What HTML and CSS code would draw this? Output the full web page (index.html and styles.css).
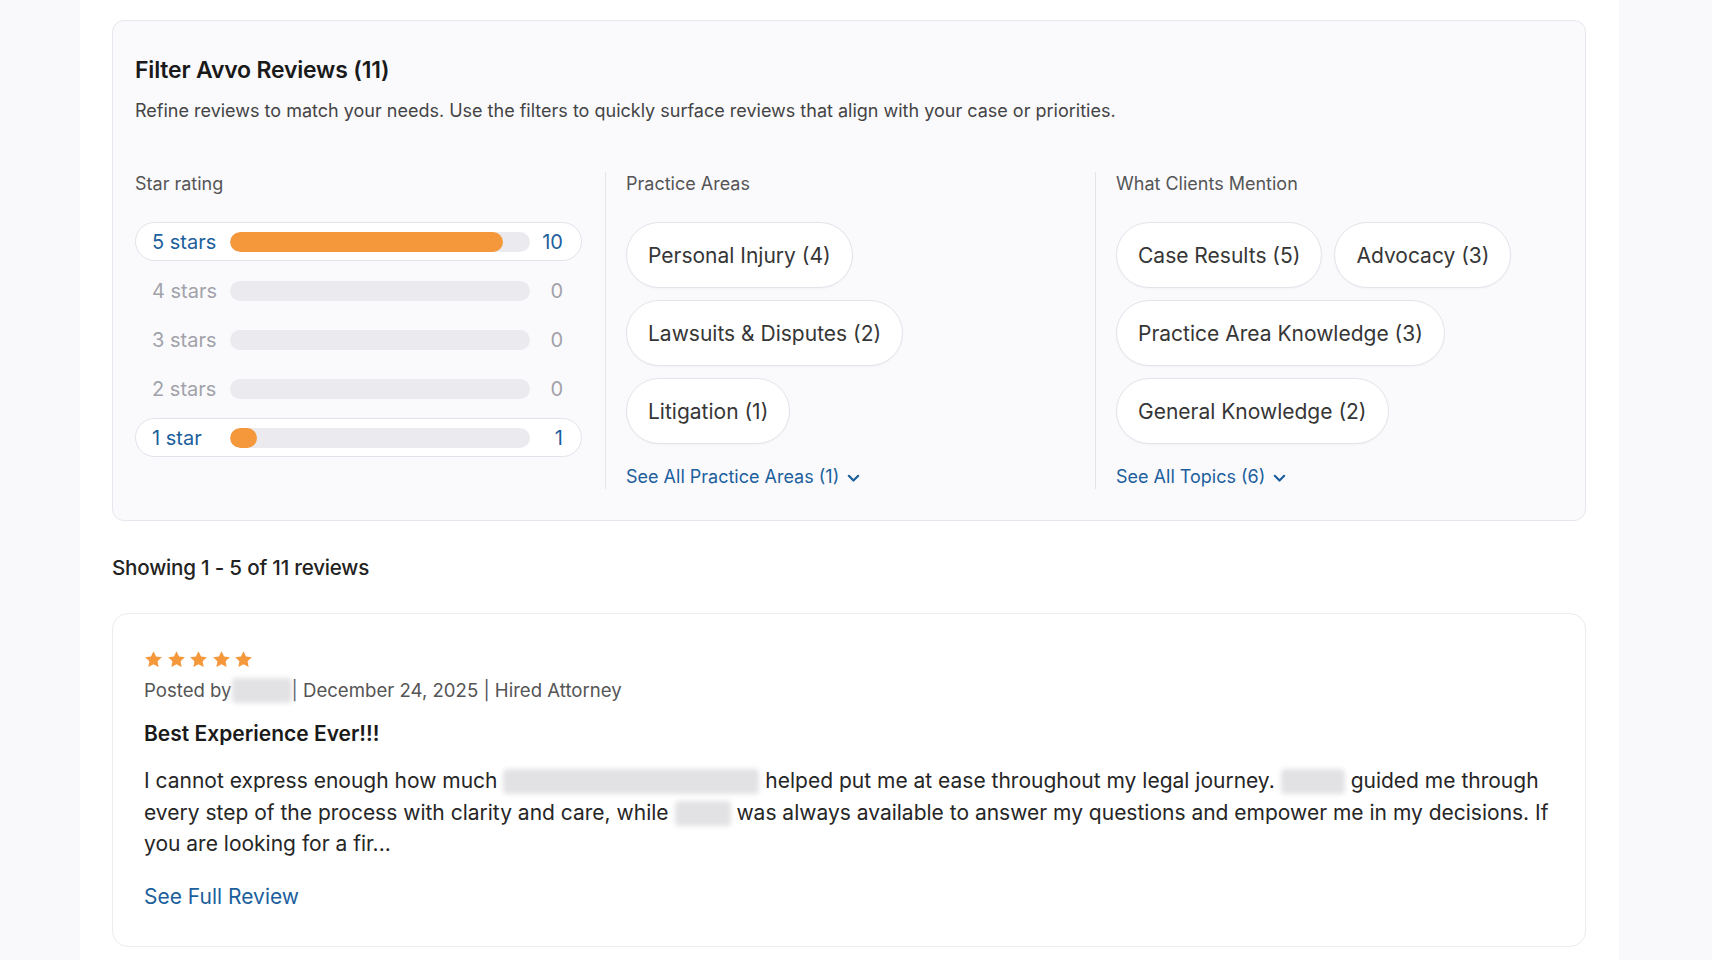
FILE: index.html
```html
<!DOCTYPE html>
<html lang="en">
<head>
    <meta charset="UTF-8">
    <meta name="viewport" content="width=device-width, initial-scale=1.0">
    <title>Avvo Reviews</title>
    <link rel="stylesheet" href="styles.css">
</head>
<body>
    <div class="page">
        <section class="filter-card">
            <h2 class="filter-title">Filter Avvo Reviews (11)</h2>
            <p class="filter-intro">Refine reviews to match your needs. Use the filters to quickly surface reviews that align with your case or priorities.</p>

            <div class="filter-cols">
                <div class="filter-col">
                    <h3 class="col-label">Star rating</h3>
                    <ul class="rating-list">
                        <li class="rating-row active">
                            <span class="rating-name">5 stars</span>
                            <span class="rating-track"><span class="rating-fill" style="width: 90.9%"></span></span>
                            <span class="rating-count">10</span>
                        </li>
                        <li class="rating-row">
                            <span class="rating-name">4 stars</span>
                            <span class="rating-track"></span>
                            <span class="rating-count">0</span>
                        </li>
                        <li class="rating-row">
                            <span class="rating-name">3 stars</span>
                            <span class="rating-track"></span>
                            <span class="rating-count">0</span>
                        </li>
                        <li class="rating-row">
                            <span class="rating-name">2 stars</span>
                            <span class="rating-track"></span>
                            <span class="rating-count">0</span>
                        </li>
                        <li class="rating-row active">
                            <span class="rating-name">1 star</span>
                            <span class="rating-track"><span class="rating-fill" style="width: 9.1%"></span></span>
                            <span class="rating-count">1</span>
                        </li>
                    </ul>
                </div>

                <div class="filter-col">
                    <h3 class="col-label">Practice Areas</h3>
                    <div class="chip-list">
                        <button class="chip">Personal Injury (4)</button>
                        <button class="chip">Lawsuits &amp; Disputes (2)</button>
                        <button class="chip">Litigation (1)</button>
                    </div>
                    <a class="see-all" href="#">See All Practice Areas (1)
                        <svg width="13" height="9" viewBox="0 0 13 9"><path d="M1.8 1.8 6.5 6.5l4.7-4.7" fill="none" stroke="currentColor" stroke-width="2.2" stroke-linecap="round" stroke-linejoin="round"/></svg>
                    </a>
                </div>

                <div class="filter-col">
                    <h3 class="col-label">What Clients Mention</h3>
                    <div class="chip-list">
                        <button class="chip">Case Results (5)</button>
                        <button class="chip">Advocacy (3)</button>
                        <button class="chip">Practice Area Knowledge (3)</button>
                        <button class="chip">General Knowledge (2)</button>
                    </div>
                    <a class="see-all" href="#">See All Topics (6)
                        <svg width="13" height="9" viewBox="0 0 13 9"><path d="M1.8 1.8 6.5 6.5l4.7-4.7" fill="none" stroke="currentColor" stroke-width="2.2" stroke-linecap="round" stroke-linejoin="round"/></svg>
                    </a>
                </div>
            </div>
        </section>

        <p class="showing">Showing 1 - 5 of 11 reviews</p>

        <article class="review-card">
            <div class="review-stars">
                <svg viewBox="0 0 20 20"><path d="M10 1.2l2.7 5.6 6.1.8-4.5 4.2 1.1 6L10 14.9l-5.4 2.9 1.1-6L1.2 7.6l6.1-.8z"/></svg>
                <svg viewBox="0 0 20 20"><path d="M10 1.2l2.7 5.6 6.1.8-4.5 4.2 1.1 6L10 14.9l-5.4 2.9 1.1-6L1.2 7.6l6.1-.8z"/></svg>
                <svg viewBox="0 0 20 20"><path d="M10 1.2l2.7 5.6 6.1.8-4.5 4.2 1.1 6L10 14.9l-5.4 2.9 1.1-6L1.2 7.6l6.1-.8z"/></svg>
                <svg viewBox="0 0 20 20"><path d="M10 1.2l2.7 5.6 6.1.8-4.5 4.2 1.1 6L10 14.9l-5.4 2.9 1.1-6L1.2 7.6l6.1-.8z"/></svg>
                <svg viewBox="0 0 20 20"><path d="M10 1.2l2.7 5.6 6.1.8-4.5 4.2 1.1 6L10 14.9l-5.4 2.9 1.1-6L1.2 7.6l6.1-.8z"/></svg>
            </div>
            <p class="review-meta">Posted by<span class="hidden-name name-author"></span>| December 24, 2025 | Hired Attorney</p>
            <h4 class="review-title">Best Experience Ever!!!</h4>
            <p class="review-body">I cannot express enough how much <span class="hidden-name name-long"></span> helped put me at ease throughout my legal journey. <span class="hidden-name name-short"></span> guided me through<br>every step of the process with clarity and care, while <span class="hidden-name name-tiny"></span> was always available to answer my questions and empower me in my decisions. If<br>you are looking for a fir...</p>
            <a class="review-link" href="#">See Full Review</a>
        </article>
    </div>
</body>
</html>
```

FILE: styles.css
```css
body {
    margin: 0;
    background: #f9f9fc;
    color: #222;
    font-family: Inter, "Noto Sans", Arial, sans-serif;
}
.page {
    width: 1539px;
    min-height: 100vh;
    margin-left: 80px;
    padding: 20px 33px 0 32px;
    box-sizing: border-box;
    background: #fff;
}

/* filter panel */
.filter-card {
    padding: 34px 22px 31px;
    background: #fafafd;
    border: 1px solid #e6e6ee;
    border-radius: 12px;
}
.filter-title {
    margin: 0;
    font-size: 23px;
    line-height: 30px;
    font-weight: 600;
    color: #1a1a1a;
    letter-spacing: -0.2px;
}
.filter-intro {
    margin: 14px 0 0;
    font-size: 18px;
    line-height: 24px;
    color: #444;
}
.filter-cols {
    display: grid;
    grid-template-columns: 470px 490px 1fr;
    margin-top: 49px;
}
.filter-col {
    padding: 0 20px;
}
.filter-col:first-child {
    padding-left: 0;
}
.filter-col:last-child {
    padding-right: 0;
}
.filter-col + .filter-col {
    border-left: 1px solid #e4e4ea;
}
.col-label {
    margin: 0 0 26px;
    font-size: 18px;
    line-height: 24px;
    font-weight: 400;
    color: #555;
}

/* star rating rows */
.rating-list {
    list-style: none;
    margin: 0;
    padding: 0;
    display: flex;
    flex-direction: column;
    gap: 10px;
    width: 447px;
}
.rating-row {
    display: grid;
    grid-template-columns: 78px 1fr 33px;
    align-items: center;
    height: 39px;
    padding: 0 18px 0 16px;
    box-sizing: border-box;
    border: 1px solid transparent;
    border-radius: 20px;
    font-size: 20px;
    color: #a2a2aa;
}
.rating-row.active {
    background: #fff;
    border-color: #e2e2ea;
    color: #1c5f9c;
}
.rating-track {
    display: block;
    height: 20px;
    border-radius: 10px;
    background: #ebebef;
    overflow: hidden;
}
.rating-fill {
    display: block;
    height: 100%;
    min-width: 24px;
    border-radius: 10px;
    background: #f5983b;
}
.rating-count {
    text-align: right;
}

/* chips */
.chip-list {
    display: flex;
    flex-wrap: wrap;
    gap: 12px;
}
.chip {
    height: 66px;
    padding: 0 21px;
    background: #fff;
    border: 1px solid #e3e3ea;
    border-radius: 33px;
    box-shadow: 0 1px 2px rgba(0, 0, 0, 0.03);
    font-family: inherit;
    font-size: 21px;
    color: #363636;
    cursor: pointer;
}
.see-all {
    display: inline-flex;
    align-items: center;
    gap: 8px;
    margin-top: 21px;
    font-size: 18px;
    line-height: 24px;
    color: #1c5f9c;
    text-decoration: none;
}
.see-all svg {
    margin-top: 2px;
}

/* review list */
.showing {
    margin: 33px 0 31px;
    font-size: 20.6px;
    line-height: 28px;
    font-weight: 500;
    color: #222;
    letter-spacing: -0.2px;
}
.review-card {
    padding: 36px 31px 35px;
    background: #fff;
    border: 1px solid #ececf1;
    border-radius: 16px;
}
.review-stars {
    display: flex;
    gap: 3.5px;
    height: 20px;
}
.review-stars svg {
    width: 19px;
    height: 19px;
    fill: #f5983b;
}
.review-meta {
    margin: 7px 0 0;
    font-size: 18.6px;
    line-height: 26px;
    color: #555;
}
.review-title {
    margin: 17px 0 0;
    font-size: 21px;
    line-height: 28px;
    font-weight: 600;
    color: #1a1a1a;
}
.review-body {
    margin: 17px 0 0;
    font-size: 21px;
    line-height: 31.5px;
    color: #262626;
}
.hidden-name {
    display: inline-block;
    height: 25px;
    vertical-align: -6px;
    background: #e2e2e5;
    border-radius: 4px;
    filter: blur(2.5px);
}
.name-author { width: 60px; }
.name-long { width: 256px; }
.name-short { width: 64px; }
.name-tiny { width: 56px; }
.review-link {
    display: inline-block;
    margin-top: 23px;
    font-size: 21px;
    line-height: 28px;
    color: #1c5f9c;
    text-decoration: none;
}
```
